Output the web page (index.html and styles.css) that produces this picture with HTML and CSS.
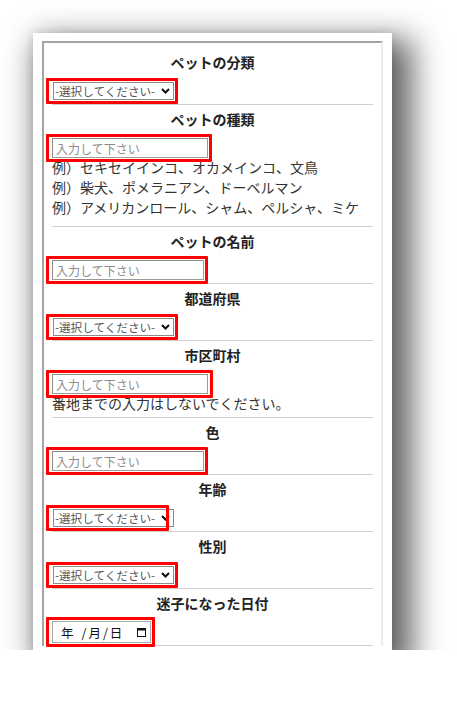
FILE: index.html
```html
<!DOCTYPE html>
<html lang="ja">
<head>
<meta charset="utf-8">
<title>迷子ペット登録</title>
<link rel="stylesheet" href="styles.css">
</head>
<body>
<div class="card">
  <div class="frame">
    <section class="sec">
      <div class="label">ペットの分類</div>
      <div class="row">
        <span class="mark">
          <span class="sel"><select><option>-選択してください-</option></select><svg class="chev" width="9" height="6" viewBox="0 0 9 6"><path d="M1 1 L4.5 4.5 L8 1" fill="none" stroke="#111" stroke-width="2"/></svg></span>
        </span>
      </div>
    </section>
    <section class="sec">
      <div class="label">ペットの種類</div>
      <div class="row">
        <span class="mark"><input class="txt" type="text" placeholder="入力して下さい"></span>
      </div>
      <div class="note">
        <div>例）セキセイインコ、オカメインコ、文鳥</div>
        <div>例）柴犬、ポメラニアン、ドーベルマン</div>
        <div>例）アメリカンロール、シャム、ペルシャ、ミケ</div>
      </div>
    </section>
    <section class="sec">
      <div class="label">ペットの名前</div>
      <div class="row">
        <span class="mark"><input class="txt short" type="text" placeholder="入力して下さい"></span>
      </div>
    </section>
    <section class="sec">
      <div class="label">都道府県</div>
      <div class="row">
        <span class="mark">
          <span class="sel"><select><option>-選択してください-</option></select><svg class="chev" width="9" height="6" viewBox="0 0 9 6"><path d="M1 1 L4.5 4.5 L8 1" fill="none" stroke="#111" stroke-width="2"/></svg></span>
        </span>
      </div>
    </section>
    <section class="sec">
      <div class="label">市区町村</div>
      <div class="row">
        <span class="mark wide"><input class="txt" type="text" placeholder="入力して下さい"></span>
      </div>
      <div class="note one">番地までの入力はしないでください。</div>
    </section>
    <section class="sec">
      <div class="label">色</div>
      <div class="row">
        <span class="mark"><input class="txt short" type="text" placeholder="入力して下さい"></span>
      </div>
    </section>
    <section class="sec">
      <div class="label">年齢</div>
      <div class="row">
        <span class="mark narrow">
          <span class="sel"><select><option>-選択してください-</option></select><svg class="chev" width="9" height="6" viewBox="0 0 9 6"><path d="M1 1 L4.5 4.5 L8 1" fill="none" stroke="#111" stroke-width="2"/></svg></span>
        </span>
      </div>
    </section>
    <section class="sec">
      <div class="label">性別</div>
      <div class="row">
        <span class="mark">
          <span class="sel"><select><option>-選択してください-</option></select><svg class="chev" width="9" height="6" viewBox="0 0 9 6"><path d="M1 1 L4.5 4.5 L8 1" fill="none" stroke="#111" stroke-width="2"/></svg></span>
        </span>
      </div>
    </section>
    <section class="sec">
      <div class="label">迷子になった日付</div>
      <div class="row">
        <span class="mark">
          <span class="date"><span class="dpart">年</span><span class="dsep">/</span><span class="dpart">月</span><span class="dsep">/</span><span class="dpart">日</span><svg class="cal" width="9" height="9" viewBox="0 0 9 9"><rect x="0.5" y="0.5" width="8" height="8" fill="none" stroke="#111" stroke-width="1"/><rect x="0.5" y="0.5" width="8" height="2" fill="#111"/></svg></span>
        </span>
      </div>
    </section>
  </div>
</div>
</body>
</html>
```

FILE: styles.css
```css
html, body {
  margin: 0;
  padding: 0;
  background: #ffffff;
}

body {
  font-family: "Noto Sans CJK JP", "Noto Sans", sans-serif;
  color: #222;
}

.card {
  margin: 33px 0 0 33px;
  width: 359px;
  height: 617px;
  background: #fff;
  overflow: hidden;
  box-shadow: 12px 14px 30px 8px rgba(0, 0, 0, 0.62), 0 0 8px rgba(0, 0, 0, 0.1);
}

.frame {
  margin: 8px 0 0 9px;
  border-top: 2px solid #a4a4a4;
  border-left: 2px solid #a4a4a4;
  border-right: 2px solid #ececec;
  padding: 5px 8px 0 8px;
  box-sizing: content-box;
  width: 321px;
}

.sec {
  padding-top: 4px;
  padding-bottom: 2px;
  border-bottom: 1px solid #cfcfcf;
}

.label {
  text-align: center;
  font-weight: bold;
  font-size: 14px;
  line-height: 20px;
  color: #222;
}

.row {
  margin-top: 8px;
  height: 22px;
  display: flex;
  align-items: center;
}

.mark {
  position: relative;
  display: inline-flex;
}

.mark::after {
  content: "";
  position: absolute;
  top: -4px;
  bottom: -4px;
  left: -6px;
  right: -4px;
  border: 3px solid #ff0000;
  border-radius: 1px;
  pointer-events: none;
}

.mark.wide::after { right: -5px; }
.mark.narrow::after { right: 5px; }

.sel {
  position: relative;
  display: inline-flex;
  margin-left: 1px;
}

.sel select {
  appearance: none;
  -webkit-appearance: none;
  width: 121px;
  height: 18px;
  box-sizing: border-box;
  border: 1px solid #8a8a8a;
  border-radius: 0;
  background: #fff;
  padding: 0 0 0 1px;
  font-family: "Noto Sans CJK JP", sans-serif;
  font-size: 11.6px;
  line-height: 16px;
  color: #555;
}

.chev {
  position: absolute;
  right: 4px;
  top: 6px;
}

.txt {
  width: 156px;
  height: 20px;
  box-sizing: border-box;
  border: 1px solid #9a9a9a;
  border-top-color: #8a8a8a;
  border-left-color: #8a8a8a;
  padding: 0 3px;
  margin: 0;
  font-family: "Noto Sans CJK JP", sans-serif;
  font-size: 12px;
  background: #fff;
}

.txt.short { width: 152px; }

.txt::placeholder {
  color: #8c8c8c;
}

.note {
  margin-top: -2px;
  padding-bottom: 7px;
  font-size: 14px;
  line-height: 20px;
  color: #333;
}

.note.one {
  padding-bottom: 2px;
}

.date {
  display: inline-flex;
  align-items: center;
  width: 99px;
  height: 22px;
  box-sizing: border-box;
  border: 1px solid #a8a8a8;
  padding: 0 4px 0 8px;
  font-size: 12.5px;
  color: #111;
}

.dpart { display: inline-block; }
.dpart:first-child { margin-right: 6px; }
.dsep { margin: 0 2px; }

.cal {
  margin-left: auto;
}
```
